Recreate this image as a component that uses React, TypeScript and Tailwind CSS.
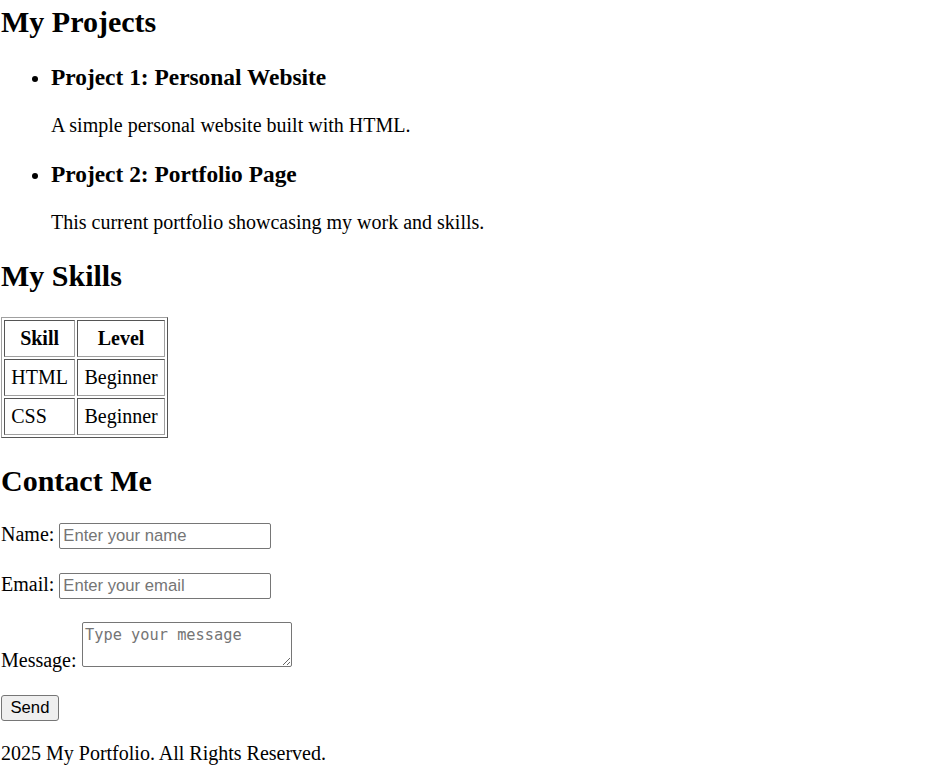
export default function App() {
  return (
    <div className="min-h-screen bg-white pl-px pt-[5px] font-['Liberation_Serif',serif] text-[20px] leading-[normal] text-black">
      <section>
        <h2 className="mb-[25px] text-[30px] font-bold">My Projects</h2>
        <ul className="my-[20px] list-disc pl-[50px]">
          <li>
            <h3 className="my-[23.4px] text-[23.4px] font-bold">
              Project 1: Personal Website
            </h3>
            <p className="my-[20px]">A simple personal website built with HTML.</p>
          </li>
          <li>
            <h3 className="my-[23.4px] text-[23.4px] font-bold">
              Project 2: Portfolio Page
            </h3>
            <p className="my-[20px]">
              This current portfolio showcasing my work and skills.
            </p>
          </li>
        </ul>
      </section>

      <section>
        <h2 className="mt-[25px] mb-[24px] text-[30px] font-bold">My Skills</h2>
        <table className="border-separate border-spacing-[2px] border border-t-[#a0a0a0] border-l-[#a0a0a0] border-r-[#555] border-b-[#555]">
          <thead>
            <tr>
              <th className="border border-t-[#555] border-l-[#555] border-r-[#a0a0a0] border-b-[#a0a0a0] px-[6.25px] py-[6px] font-bold">
                Skill
              </th>
              <th className="border border-t-[#555] border-l-[#555] border-r-[#a0a0a0] border-b-[#a0a0a0] px-[6.25px] py-[6px] font-bold">
                Level
              </th>
            </tr>
          </thead>
          <tbody>
            <tr>
              <td className="border border-t-[#555] border-l-[#555] border-r-[#a0a0a0] border-b-[#a0a0a0] px-[6.25px] py-[6px]">
                HTML
              </td>
              <td className="border border-t-[#555] border-l-[#555] border-r-[#a0a0a0] border-b-[#a0a0a0] px-[6.25px] py-[6px]">
                Beginner
              </td>
            </tr>
            <tr>
              <td className="border border-t-[#555] border-l-[#555] border-r-[#a0a0a0] border-b-[#a0a0a0] px-[6.25px] py-[6px]">
                CSS
              </td>
              <td className="border border-t-[#555] border-l-[#555] border-r-[#a0a0a0] border-b-[#a0a0a0] px-[6.25px] py-[6px]">
                Beginner
              </td>
            </tr>
          </tbody>
        </table>
      </section>

      <section>
        <h2 className="mt-[26px] mb-[25px] text-[30px] font-bold">Contact Me</h2>
        <form>
          <label>Name:</label>{" "}
          <input
            type="text"
            placeholder="Enter your name"
            className="mb-px h-[26px] w-[212px] rounded-[2px] border border-[#767676] px-[3px] font-['Liberation_Sans',Arial,sans-serif] text-[16.67px] placeholder:text-[#757575]"
          />
          <br />
          <br />
          <label>Email:</label>{" "}
          <input
            type="email"
            placeholder="Enter your email"
            className="h-[26px] w-[212px] rounded-[2px] border border-[#767676] px-[3px] font-['Liberation_Sans',Arial,sans-serif] text-[16.67px] placeholder:text-[#757575]"
          />
          <br />
          <br />
          <label>Message:</label>{" "}
          <textarea
            placeholder="Type your message"
            className="h-[45px] w-[210px] rounded-[2px] border border-[#767676] p-[2.5px] font-['DejaVu_Sans_Mono',monospace] text-[15.3px] leading-[normal] placeholder:text-[#757575]"
          />
          <br />
          <br />
          <button
            type="button"
            className="mb-px h-[26px] rounded-[3px] border border-[#767676] bg-[#efefef] px-[8.5px] font-['Liberation_Sans',Arial,sans-serif] text-[16.67px]"
          >
            Send
          </button>
        </form>
      </section>

      <footer>
        <p className="my-[20px]">2025 My Portfolio. All Rights Reserved.</p>
      </footer>
    </div>
  );
}
